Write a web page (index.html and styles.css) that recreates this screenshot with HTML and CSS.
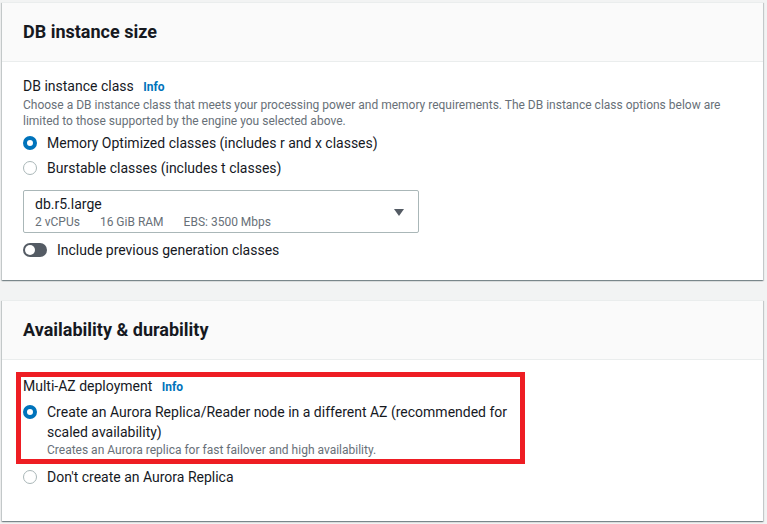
FILE: index.html
```html
<!DOCTYPE html>
<html lang="en">
<head>
<meta charset="utf-8">
<title>DB instance settings</title>
<link rel="stylesheet" href="styles.css">
</head>
<body>
<main class="page">
  <section class="card">
    <header class="card-header"><h2>DB instance size</h2></header>
    <div class="card-body">
      <div class="field-label">DB instance class <a class="info">Info</a></div>
      <p class="desc">Choose a DB instance class that meets your processing power and memory requirements. The DB instance class options below are limited to those supported by the engine you selected above.</p>
      <div class="radios">
        <label class="radio-row"><span class="radio checked"></span><span class="radio-text">Memory Optimized classes (includes r and x classes)</span></label>
        <label class="radio-row"><span class="radio"></span><span class="radio-text">Burstable classes (includes t classes)</span></label>
      </div>
      <div class="select">
        <div class="select-content">
          <div class="select-value">db.r5.large</div>
          <div class="select-tags"><span>2 vCPUs</span><span>16 GiB RAM</span><span>EBS: 3500 Mbps</span></div>
        </div>
        <svg class="caret" width="10" height="8" viewBox="0 0 10 8"><path d="M0 0h10L5 7z" fill="#545b64"/></svg>
      </div>
      <label class="toggle-row"><span class="toggle"><span class="knob"></span></span><span>Include previous generation classes</span></label>
    </div>
  </section>

  <section class="card">
    <header class="card-header"><h2>Availability &amp; durability</h2></header>
    <div class="card-body body-2">
      <div class="highlight">
        <div class="field-label">Multi-AZ deployment <a class="info">Info</a></div>
        <label class="radio-row top">
          <span class="radio checked"></span>
          <span class="radio-text">Create an Aurora Replica/Reader node in a different AZ (recommended for scaled availability)
            <span class="radio-desc">Creates an Aurora replica for fast failover and high availability.</span>
          </span>
        </label>
      </div>
      <label class="radio-row after"><span class="radio"></span><span class="radio-text">Don't create an Aurora Replica</span></label>
    </div>
  </section>
</main>
</body>
</html>
```

FILE: styles.css
```css
* { box-sizing: border-box; }
html, body { margin: 0; padding: 0; }
body {
  background: #f2f3f3;
  font-family: Roboto, "Liberation Sans", Arial, sans-serif;
  color: #16191f;
  width: 767px;
  height: 524px;
  overflow: hidden;
}
.page {
  padding: 2px 4px 0 2px;
  display: flex;
  flex-direction: column;
  gap: 20px;
}
.card {
  background: #fff;
  box-shadow: 0 1px 1px 0 rgba(0,28,36,.3), 1px 1px 1px 0 rgba(0,28,36,.15), -1px 1px 1px 0 rgba(0,28,36,.15);
  border-top: 1px solid #eaeded;
}
.card-header {
  background: #fafafa;
  border-bottom: 1px solid #eaeded;
  height: 59px;
  display: flex;
  align-items: center;
  padding: 0 21px;
}
.card-header h2 {
  margin: 0;
  font-size: 18px;
  font-weight: 700;
  line-height: 22px;
}
.card-body {
  padding: 15px 21px 20px;
}
.field-label {
  font-size: 14px;
  line-height: 19px;
}
.info {
  color: #0073bb;
  font-weight: 700;
  font-size: 12px;
  margin-left: 6px;
}
.desc {
  margin: 0;
  font-size: 12px;
  line-height: 16px;
  color: #687078;
}
.radios {
  margin-top: 4px;
  display: flex;
  flex-direction: column;
  gap: 5px;
}
.radio-row {
  display: flex;
  align-items: flex-start;
  gap: 10px;
  font-size: 14px;
  line-height: 20px;
}
.radio {
  flex: none;
  width: 14px;
  height: 14px;
  border-radius: 50%;
  border: 1.5px solid #aab7b8;
  background: #fff;
  margin-top: 3px;
}
.radio.checked {
  border: 4px solid #0073bb;
}
.radio-text { display: block; }
.radio-desc {
  display: block;
  font-size: 12px;
  line-height: 16px;
  color: #687078;
}
.select {
  margin-top: 12px;
  width: 396px;
  height: 43px;
  border: 1px solid #aab7b8;
  border-radius: 2px;
  display: flex;
  align-items: center;
  padding: 0 14px 0 11px;
}
.select-content { flex: 1; }
.select-value { font-size: 14px; line-height: 20px; }
.select-tags {
  font-size: 12px;
  line-height: 16px;
  color: #687078;
  display: flex;
  gap: 20px;
}
.caret { flex: none; margin-top: 2px; }
.toggle-row {
  margin-top: 7px;
  display: flex;
  align-items: center;
  gap: 10px;
  font-size: 14px;
  line-height: 20px;
}
.toggle {
  width: 24px;
  height: 14px;
  border-radius: 7px;
  background: #545b64;
  display: flex;
  align-items: center;
  padding-left: 2px;
}
.knob {
  width: 10px;
  height: 10px;
  border-radius: 50%;
  background: #fff;
}
.body-2 { padding-top: 12px; padding-bottom: 34px; }
.highlight {
  border: 5px solid #ee1d23;
  margin-left: -7px;
  width: 509px;
  padding: 0 2px 1px;
}
.radio-row.top { margin-top: 5px; }
.radio-row.after { margin-top: 3px; }
```
